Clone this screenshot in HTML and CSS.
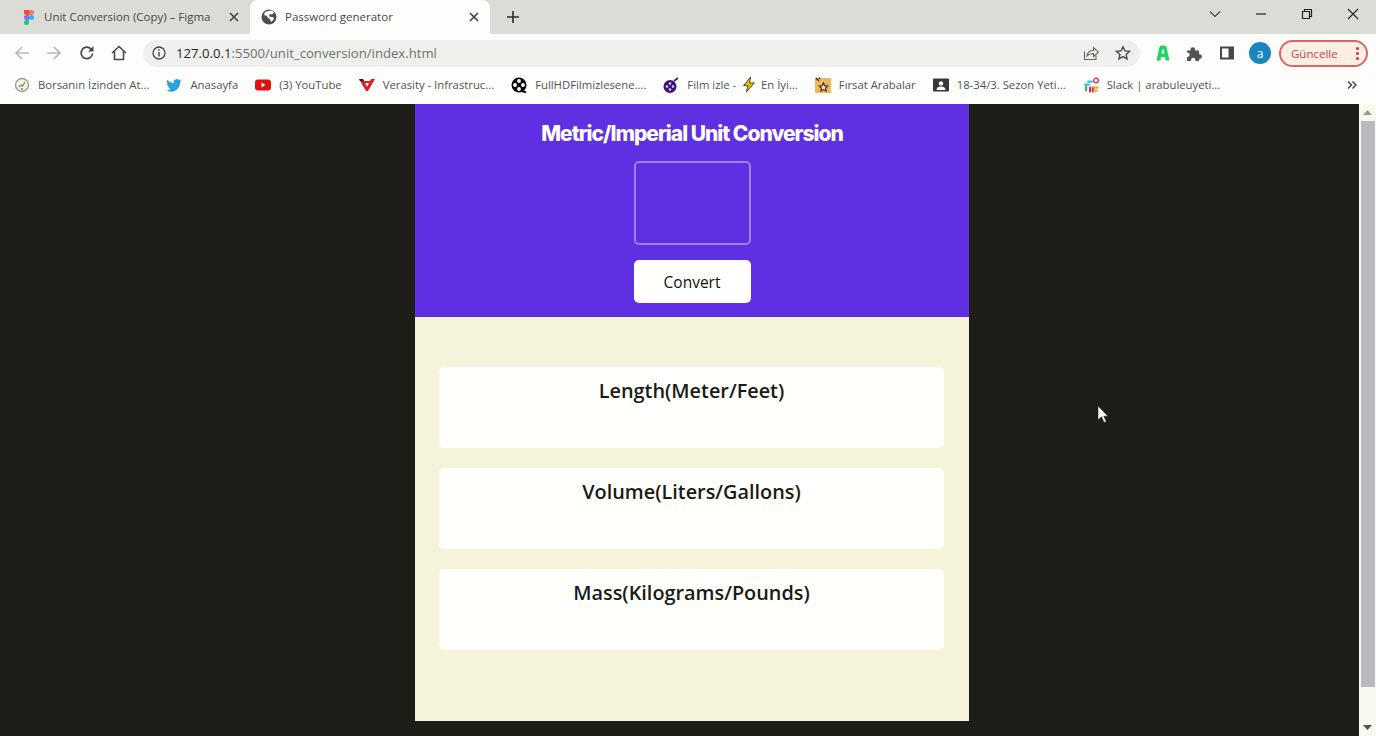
FILE: index.html
```html
<!DOCTYPE html>
<html lang="en">
<head>
  <meta charset="UTF-8" />
  <title>Password generator</title>
  <link rel="stylesheet" href="styles.css">
</head>
<body>

  <header class="browser">
    <div class="tabstrip">
      <div class="tab">
        <svg class="tab-icon" viewBox="0 0 16 16" width="16" height="16">
          <path d="M3 1h5v5H5.500A2.500 2.500 0 0 1 3 3.500z" fill="#f24e1e" transform="translate(1 0)"/>
          <path d="M8 1h2.500a2.500 2.500 0 0 1 0 5H8z" fill="#ff7262" transform="translate(1 0)"/>
          <path d="M3 8.500A2.500 2.500 0 0 1 5.500 6H8v5H5.500A2.500 2.500 0 0 1 3 8.500z" fill="#a259ff" transform="translate(1 0)"/>
          <circle cx="11.500" cy="8.500" r="2.500" fill="#1abcfe"/>
          <path d="M4 13.500A2.500 2.500 0 0 1 6.500 11H9v2.500a2.500 2.500 0 0 1-5 0z" fill="#0acf83"/>
        </svg>
        <span class="tab-title">Unit Conversion (Copy) – Figma</span>
        <svg class="tab-close" viewBox="0 0 10 10" width="10" height="10"><path d="M1 1l8 8M9 1l-8 8" stroke="#3c4043" stroke-width="1.600"/></svg>
      </div>
      <div class="tab tab-active">
        <svg class="tab-icon" viewBox="0 0 16 16" width="16" height="16">
          <circle cx="8" cy="8" r="7.500" fill="#4c4e51"/>
          <path d="M7 2l4-.5 2 2-2 2-2-.5-1 1 1 2 3 0 1 2-3 3-1-3-2-1-1-2-3-1 1-3z" fill="#fff"/>
        </svg>
        <span class="tab-title">Password generator</span>
        <svg class="tab-close" viewBox="0 0 10 10" width="10" height="10"><path d="M1 1l8 8M9 1l-8 8" stroke="#3c4043" stroke-width="1.600"/></svg>
      </div>
      <svg class="new-tab" viewBox="0 0 12 12" width="12" height="12"><path d="M6 0v12M0 6h12" stroke="#2b2f33" stroke-width="1.600"/></svg>
      <div class="window-btns">
        <svg viewBox="0 0 12 12" width="12" height="12"><path d="M1 3.500l5 5 5-5" fill="none" stroke="#3c4043" stroke-width="1.100"/></svg>
        <svg viewBox="0 0 12 12" width="12" height="12"><path d="M1 6h10" stroke="#222" stroke-width="1.200"/></svg>
        <svg viewBox="0 0 12 12" width="12" height="12"><path d="M1.500 3.500h7v7h-7zM3.500 3.500v-2h7v7h-2" fill="none" stroke="#222" stroke-width="1.200"/></svg>
        <svg viewBox="0 0 12 12" width="12" height="12"><path d="M1 1l10 10M11 1L1 11" stroke="#222" stroke-width="1.100"/></svg>
      </div>
    </div>

    <div class="toolbar">
      <div class="nav-btns">
        <svg viewBox="0 0 16 16" width="16" height="16"><path d="M15 8H2M8 2L2 8l6 6" fill="none" stroke="#b4b6bb" stroke-width="1.600"/></svg>
        <svg viewBox="0 0 16 16" width="16" height="16"><path d="M1 8h13M8 2l6 6-6 6" fill="none" stroke="#b4b6bb" stroke-width="1.600"/></svg>
        <svg class="nav-reload" viewBox="0 0 16 16" width="16" height="16"><path d="M13.500 8.500A5.700 5.700 0 1 1 12 4" fill="none" stroke="#45484c" stroke-width="1.700"/><path d="M14.500 1v5.500H9z" fill="#45484c"/></svg>
        <svg viewBox="0 0 16 16" width="16" height="16"><path d="M1 8l7-6.500L15 8M3.500 6.500V14.500h9V6.500" fill="none" stroke="#45484c" stroke-width="1.600"/></svg>
      </div>
      <div class="omnibox">
        <svg viewBox="0 0 14 14" width="14" height="14"><circle cx="7" cy="7" r="6" fill="none" stroke="#45484c" stroke-width="1.300"/><path d="M7 6v4.500M7 3.300v1.500" stroke="#45484c" stroke-width="1.400"/></svg>
        <span class="url"><span class="url-host">127.0.0.1</span>:5500/unit_conversion/index.html</span>
        <svg class="omni-share" viewBox="0 0 16 16" width="16" height="16"><path d="M1.500 6.500v8h11.500v-4" fill="none" stroke="#5f6368" stroke-width="1.100"/><path d="M4 11c.5-3.500 3-5.500 6.500-5.500V2.500l5 4.700-5 4.300V8.500C7.500 8.500 5.500 9.300 4 11z" fill="none" stroke="#5f6368" stroke-width="1.100"/></svg>
        <svg viewBox="0 0 16 16" width="16" height="16"><path d="M8 1.800l1.900 4.100 4.500.5-3.300 3 .9 4.400L8 11.600l-4 2.200.9-4.400-3.300-3 4.500-.5z" fill="none" stroke="#45484c" stroke-width="1.400"/></svg>
      </div>
      <div class="ext-btns">
        <svg viewBox="0 0 16 16" width="16" height="16"><path d="M1.500 15.500L4.500 2A2 2 0 0 1 6.500 .5h3A2 2 0 0 1 11.500 2l3 13.500h-4L10 12H6l-.5 3.500zM6.500 8.500h3L8.700 4.500H7.300z" fill="#1ed760" fill-rule="evenodd"/></svg>
        <svg viewBox="0 0 16 16" width="16" height="16"><path d="M0 5.500h3.500V4.500a2.300 2.300 0 0 1 4.600 0v1h4v3.800h.5a2.300 2.300 0 0 1 0 4.600h-.5V16H8.300v-1.200a2.100 2.100 0 0 0-4.200 0V16H0v-4h.8a2.300 2.300 0 0 0 0-4.500H0z" fill="#505357"/></svg>
        <svg viewBox="0 0 16 16" width="16" height="16"><path d="M2 2.500h12v11H2z" fill="none" stroke="#45484c" stroke-width="2"/><path d="M9.500 2.500H14v11H9.500z" fill="#45484c"/></svg>
      </div>
      <span class="avatar">a</span>
      <div class="update-btn">
        <span>Güncelle</span>
        <span class="update-dots"><i></i><i></i><i></i></span>
      </div>
    </div>

    <div class="bookmarks">
      <div class="bookmark">
        <svg viewBox="0 0 16 16" width="16" height="16"><circle cx="8" cy="8" r="6.500" fill="#f4f4ee" stroke="#9a9d92" stroke-width="1.400"/><path d="M5 10l2-2 1.500 1L11 5" fill="none" stroke="#6b9b4a" stroke-width="1.300"/><circle cx="8" cy="12" r="1" fill="#d4503c"/></svg>
        <span>Borsanın İzinden At...</span>
      </div>
      <div class="bookmark">
        <svg viewBox="0 0 16 16" width="16" height="16"><path d="M15.500 3.500c-.6.300-1.200.4-1.800.5.600-.4 1.100-1 1.300-1.700-.6.400-1.300.6-2 .8a3.100 3.100 0 0 0-5.300 2.800C5 5.800 2.700 4.600 1.200 2.700c-.8 1.400-.4 3.200 1 4.100-.5 0-1-.1-1.400-.4 0 1.500 1.100 2.800 2.500 3.100-.5.100-1 .2-1.400.1.400 1.200 1.600 2.100 2.900 2.200A6.200 6.200 0 0 1 .2 13.100 8.800 8.800 0 0 0 14 5.300c.6-.5 1.100-1.100 1.500-1.800z" fill="#2aa3d8"/></svg>
        <span>Anasayfa</span>
      </div>
      <div class="bookmark">
        <svg viewBox="0 0 16 16" width="16" height="16"><rect x="0" y="2.500" width="16" height="11" rx="3" fill="#e01010"/><path d="M6.500 5.500l4 2.500-4 2.500z" fill="#fff"/></svg>
        <span>(3) YouTube</span>
      </div>
      <div class="bookmark">
        <svg viewBox="0 0 16 16" width="16" height="16"><path d="M0 2h4l4 8 2-4H6L5 4h6l1-2h4l-7 12H7z" fill="#d81f2a"/><path d="M0 2h4l1 2H1z" fill="#20242c"/></svg>
        <span>Verasity - Infrastruc...</span>
      </div>
      <div class="bookmark">
        <svg viewBox="0 0 16 16" width="16" height="16"><circle cx="8" cy="8" r="7.500" fill="#0a0a0a"/><circle cx="8" cy="4" r="1.900" fill="#fff"/><circle cx="8" cy="12" r="1.900" fill="#fff"/><circle cx="4" cy="8" r="1.900" fill="#fff"/><circle cx="12" cy="8" r="1.900" fill="#fff"/><path d="M11 14l4 1.500" stroke="#0a0a0a" stroke-width="2"/></svg>
        <span>FullHDFilmizlesene....</span>
      </div>
      <div class="bookmark">
        <svg viewBox="0 0 16 16" width="16" height="16"><circle cx="7" cy="9.500" r="6.500" fill="#3b1478"/><circle cx="7" cy="6.500" r="1.200" fill="#e6dcf5"/><circle cx="7" cy="12.500" r="1.200" fill="#e6dcf5"/><circle cx="4" cy="9.500" r="1.200" fill="#e6dcf5"/><circle cx="10" cy="9.500" r="1.200" fill="#e6dcf5"/><path d="M11 4l4-3" stroke="#3b1478" stroke-width="1.600"/></svg>
        <span class="bm-film">Film izle - <svg viewBox="0 0 12 14" width="14" height="15"><path d="M7.500 0L1 8h4l-1.500 6L11 5.500H6.500z" fill="#f2b807" stroke="#3c3200" stroke-width=".8"/></svg> En İyi...</span>
      </div>
      <div class="bookmark">
        <svg viewBox="0 0 16 16" width="16" height="16"><rect y="1" width="16" height="15" fill="#edb75e"/><path d="M8.500 6l1.300 2.700 2.900.3-2.100 2 .6 2.900-2.700-1.400-2.600 1.400.5-2.900-2.100-2 2.900-.3z" fill="#f7dfae" stroke="#2d2a20" stroke-width="1.100"/><path d="M1 1l3 3M4 .5l1 1.500" stroke="#2d2a20" stroke-width="1.300"/></svg>
        <span>Fırsat Arabalar</span>
      </div>
      <div class="bookmark">
        <svg viewBox="0 0 16 16" width="16" height="16"><rect y="1.500" width="16" height="13" rx="1" fill="#35373a"/><circle cx="8" cy="6.500" r="2.200" fill="#fff"/><path d="M3.500 13c0-2.500 2-3.500 4.500-3.500s4.500 1 4.500 3.500z" fill="#fff"/></svg>
        <span>18-34/3. Sezon Yeti...</span>
      </div>
      <div class="bookmark">
        <svg viewBox="0 0 16 16" width="16" height="16"><rect x="4" y="3.500" width="6" height="2.200" rx="1.100" fill="#36c5f0"/><rect x="1" y="6.500" width="6" height="2.200" rx="1.100" fill="#36c5f0"/><rect x="2" y="8.500" width="2.200" height="6" rx="1.100" fill="#2eb67d"/><rect x="6" y="9.500" width="2.200" height="6" rx="1.100" fill="#e01e5a"/><rect x="9" y="9.500" width="2.200" height="6" rx="1.100" fill="#e01e5a"/><rect x="10" y="9.500" width="6" height="2.200" rx="1.100" fill="#ecb22e"/><rect x="10" y="12.500" width="5" height="2.200" rx="1.100" fill="#ecb22e"/><circle cx="13" cy="3.500" r="2.300" fill="none" stroke="#d83048" stroke-width="1.300"/></svg>
        <span>Slack | arabuleuyeti...</span>
      </div>
      <svg class="bm-more" viewBox="0 0 10 10" width="10" height="10"><path d="M1 1.500L4.500 5 1 8.500M5.500 1.500L9 5 5.500 8.500" fill="none" stroke="#45484c" stroke-width="1.500"/></svg>
    </div>
  </header>

  <div class="viewport">
    <main class="page">
      <section class="hero">
        <h1>Metric/Imperial Unit Conversion</h1>
        <input class="unit-input" type="text">
        <button class="convert-btn" type="button">Convert</button>
      </section>
      <section class="results">
        <div class="card"><h2>Length(Meter/Feet)</h2></div>
        <div class="card"><h2>Volume(Liters/Gallons)</h2></div>
        <div class="card"><h2>Mass(Kilograms/Pounds)</h2></div>
      </section>
    </main>

    <div class="scrollbar">
      <svg viewBox="0 0 9 5" width="9" height="5"><path d="M0 5l4.500-5L9 5z" fill="#9a9a9a"/></svg>
      <div class="scroll-thumb"></div>
      <svg viewBox="0 0 9 5" width="9" height="5"><path d="M0 0l4.500 5L9 0z" fill="#505050"/></svg>
    </div>

    <svg class="cursor" viewBox="0 0 12 19" width="12" height="19"><path d="M1 1v14l3.500-3.200L7 17.500l2.300-1-2.500-5.300H11z" fill="#fff" stroke="#222" stroke-width=".6"/></svg>
  </div>

</body>
</html>
```

FILE: styles.css
```css
* {
  box-sizing: border-box;
}

html, body {
  height: 100%;
}

body {
  margin: 0;
  overflow: hidden;
  display: flex;
  flex-direction: column;
  font-family: 'Open Sans', 'Noto Sans', sans-serif;
  background-color: #1e1e19;
}

/* browser chrome */
.browser {
  height: 104px;
  flex: none;
  background-color: #fdfdfb;
  color: #45484c;
}

.tabstrip {
  height: 34px;
  display: flex;
  align-items: center;
  padding-left: 8px;
  background-color: #dbdcd5;
  font-size: 11.5px;
}

.tab {
  width: 242px;
  height: 34px;
  display: flex;
  align-items: center;
  padding: 0 11px 0 12px;
}

.tab-active {
  width: 240px;
  padding-left: 11px;
  background-color: #fdfdfb;
  border-radius: 8px 8px 0 0;
}

.tab-icon {
  margin-right: 8px;
  flex: none;
}

.tab-title {
  flex: 1;
  padding-bottom: 1px;
  white-space: nowrap;
  overflow: hidden;
}

.new-tab {
  margin-left: 17px;
}

.window-btns {
  margin-left: auto;
  display: flex;
  gap: 34px;
  padding-right: 17px;
  margin-top: -6px;
}

.toolbar {
  height: 34px;
  display: flex;
  align-items: center;
  padding: 4px 0 0 14px;
}

.nav-btns {
  display: flex;
  gap: 16px;
}

.nav-reload {
  margin-left: 1px;
}

.omnibox {
  width: 997px;
  height: 27px;
  margin-left: 16px;
  padding: 0 9px;
  display: flex;
  align-items: center;
  gap: 10px;
  background-color: #eff0eb;
  border-radius: 14px;
  font-size: 13.15px;
}

.url {
  flex: 1;
  color: #6d7074;
  white-space: nowrap;
}

.url-host {
  color: #26282b;
}

.omni-share {
  margin-right: 6px;
}

.ext-btns {
  display: flex;
  gap: 16px;
  margin-left: 15px;
}

.avatar {
  width: 22px;
  height: 22px;
  margin-left: 14px;
  border-radius: 50%;
  background-color: #1a86c0;
  color: #fff;
  font-size: 12px;
  display: flex;
  align-items: center;
  justify-content: center;
}

.update-btn {
  width: 89px;
  height: 27px;
  margin-left: 8px;
  padding: 0 7px 0 10px;
  display: flex;
  align-items: center;
  justify-content: space-between;
  background-color: #fbeee2;
  border: 2px solid #d4686a;
  border-radius: 14px;
  color: #b94a4f;
  font-size: 11.5px;
}

.update-dots {
  display: flex;
  flex-direction: column;
  gap: 2px;
}

.update-dots i {
  width: 3px;
  height: 3px;
  border-radius: 50%;
  background-color: #c8323a;
}

.bookmarks {
  height: 36px;
  display: flex;
  align-items: center;
  padding: 0 0 3px 14px;
  font-size: 11.3px;
  color: #50535a;
}

.bookmark {
  display: flex;
  align-items: center;
  gap: 8px;
  margin-right: 17px;
  white-space: nowrap;
}

.bookmark > svg {
  flex: none;
}

.bm-film svg {
  margin: 0 2px 0 3px;
  vertical-align: -3px;
}

.bm-more {
  margin-left: auto;
  margin-right: 19px;
}

/* page area */
.viewport {
  flex: 1;
  display: flex;
  position: relative;
  min-height: 0;
}

.page {
  width: 554px;
  height: 617px;
  margin-left: 415px;
  display: flex;
  flex-direction: column;
  background-color: #f5f4da;
}

.hero {
  height: 213px;
  display: flex;
  flex-direction: column;
  align-items: center;
  padding-top: 18px;
  background-color: #5f2fe2;
}

.hero h1 {
  margin: 0 0 15px;
  font-family: Inter, sans-serif;
  font-size: 21px;
  line-height: 24px;
  font-weight: 800;
  letter-spacing: -1px;
  color: #fff;
}

.unit-input {
  width: 117px;
  height: 84px;
  background: transparent;
  border: 2px solid #9d82ee;
  border-radius: 5px;
}

.convert-btn {
  width: 117px;
  height: 43px;
  margin-top: 15px;
  background-color: #fffffb;
  border: 0;
  border-radius: 5px;
  color: #111;
  font-family: 'Open Sans', sans-serif;
  font-size: 15.5px;
}

.results {
  padding: 50px 25px 0 24px;
  display: flex;
  flex-direction: column;
  gap: 20px;
}

.card {
  height: 81px;
  padding-top: 11px;
  background-color: #fffffb;
  border-radius: 5px;
  text-align: center;
}

.card h2 {
  margin: 0;
  font-family: 'Open Sans', sans-serif;
  font-size: 19.85px;
  line-height: 26px;
  font-weight: 600;
  color: #1a1a16;
}

.scrollbar {
  width: 17px;
  margin-left: auto;
  padding: 6px 0;
  display: flex;
  flex-direction: column;
  align-items: center;
  justify-content: space-between;
  background-color: #f8f8ee;
}

.scroll-thumb {
  width: 14px;
  flex: 1;
  margin: 6px 0 38px 1px;
  background-color: #b8bac0;
}

.cursor {
  position: absolute;
  left: 1097px;
  top: 301px;
}
```
